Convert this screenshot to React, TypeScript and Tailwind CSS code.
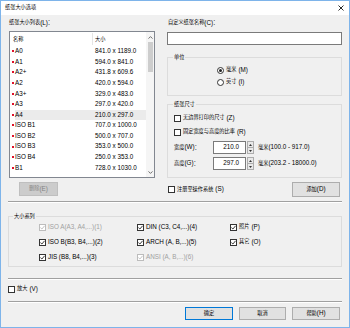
import React from "react";

// CJK runs render a bit smaller than latin in the reference
const CJK = /([\u2E80-\u9FFF\u3000-\u303F\uFF00-\uFFEF]+)/;

function T({ s }: { s: string }) {
  return (
    <>
      {s.split(CJK).map((part, i) =>
        i % 2 === 1 ? (
          <span key={i} className="text-[5.2px]">
            {part}
          </span>
        ) : (
          part
        )
      )}
    </>
  );
}

function Check({ checked, disabled }: { checked?: boolean; disabled?: boolean }) {
  return (
    <span
      className={`flex h-[7px] w-[7px] shrink-0 items-center justify-center border bg-white ${
        disabled ? "border-[#bcbcbc]" : "border-[#333333]"
      }`}
    >
      {checked && (
        <svg width="5" height="5" viewBox="0 0 5 5">
          <path
            d="M0.4 2.6 L1.9 4 L4.6 0.8"
            fill="none"
            stroke={disabled ? "#bcbcbc" : "#222222"}
            strokeWidth="0.9"
          />
        </svg>
      )}
    </span>
  );
}

function Radio({ on }: { on?: boolean }) {
  return (
    <span className="flex h-[7px] w-[7px] shrink-0 items-center justify-center rounded-full border border-[#333333] bg-white">
      {on && <span className="h-[3px] w-[3px] rounded-full bg-[#222222]" />}
    </span>
  );
}

function Btn({
  label,
  primary,
  disabled,
  className = "",
}: {
  label: string;
  primary?: boolean;
  disabled?: boolean;
  className?: string;
}) {
  return (
    <div
      className={`flex items-center justify-center border ${
        disabled
          ? "border-[#bfbfbf] bg-[#cccccc] text-[#838383]"
          : primary
          ? "border-[#0078d7] bg-[#e1e1e1]"
          : "border-[#adadad] bg-[#e1e1e1]"
      } ${className}`}
    >
      <T s={label} />
    </div>
  );
}

function Separator({ className = "" }: { className?: string }) {
  return <div className={`mx-[7px] h-[2px] border-t border-b border-t-[#a0a0a0] border-b-white ${className}`} />;
}

const papers = [
  { name: "A0", size: "841.0 x 1189.0" },
  { name: "A1", size: "594.0 x 841.0" },
  { name: "A2+", size: "431.8 x 609.6" },
  { name: "A2", size: "420.0 x 594.0" },
  { name: "A3+", size: "329.0 x 483.0" },
  { name: "A3", size: "297.0 x 420.0" },
  { name: "A4", size: "210.0 x 297.0" },
  { name: "ISO B1", size: "707.0 x 1000.0" },
  { name: "ISO B2", size: "500.0 x 707.0" },
  { name: "ISO B3", size: "353.0 x 500.0" },
  { name: "ISO B4", size: "250.0 x 353.0" },
  { name: "B1", size: "728.0 x 1030.0" },
];

const series = [
  { label: "ISO A(A3, A4,...)(1)", checked: true, disabled: true },
  { label: "DIN (C3, C4,...)(4)", checked: true },
  { label: "照片(P)", checked: true },
  { label: "ISO B(B3, B4,...)(2)", checked: true },
  { label: "ARCH (A, B,...)(5)", checked: true },
  { label: "其它(O)", checked: true },
  { label: "JIS (B8, B4,...)(3)", checked: true },
  { label: "ANSI (A, B,...)(6)", checked: true, disabled: true },
];

function SizeRow({ label, value, range }: { label: string; value: string; range: string }) {
  return (
    <div className="flex h-[13px] items-center pl-[6px]">
      <div className="w-[39px]">
        <T s={label} />
      </div>
      <div className="flex h-full w-[33px] items-center justify-end border border-[#7a7a7a] bg-white pr-[6px]">
        {value}
      </div>
      <div className="ml-px flex h-full w-[7px] flex-col border border-[#adadad] bg-[#e9e9e9]">
        <div className="flex flex-1 items-center justify-center border-b border-[#adadad]">
          <svg width="3" height="2" viewBox="0 0 3 2">
            <path d="M0 2 L1.5 0 L3 2 Z" fill="#333" />
          </svg>
        </div>
        <div className="flex flex-1 items-center justify-center">
          <svg width="3" height="2" viewBox="0 0 3 2">
            <path d="M0 0 L1.5 2 L3 0 Z" fill="#333" />
          </svg>
        </div>
      </div>
      <div className="ml-[4px]">
        <T s={range} />
      </div>
    </div>
  );
}

export default function App() {
  return (
    <div className="flex h-[328px] w-[350px] flex-col border border-[#7eb4ea] bg-[#f0f0f0] font-['Liberation_Sans','Noto_Sans_CJK_SC',sans-serif] text-[6.3px] leading-none text-black">
      {/* Title bar */}
      <div className="flex h-[14px] items-center justify-between bg-white pl-[4px] pr-[5px]">
        <T s="纸张大小选项" />
        <svg width="6" height="6" viewBox="0 0 6 6">
          <path d="M0.5 0.5 L5.5 5.5 M5.5 0.5 L0.5 5.5" stroke="#111" strokeWidth="0.9" />
        </svg>
      </div>

      {/* Top section */}
      <div className="flex pl-[8px] pt-[3px]">
        {/* Paper list */}
        <div className="flex w-[146px] flex-col">
          <div className="flex h-[10px] items-center">
            <T s="纸张大小列表(L)：" />
          </div>
          <div className="mt-[3px] flex h-[147px] border border-[#828790] bg-white">
            <div className="flex flex-1 flex-col">
              <div className="flex h-[14px] items-center">
                <div className="w-[82px] pl-[3px]">
                  <T s="名称" />
                </div>
                <div className="h-[12px] w-px bg-[#e5e5e5]" />
                <div className="pl-[2px]">
                  <T s="大小" />
                </div>
              </div>
              {papers.map((p) => (
                <div key={p.name} className="flex h-[10.6px] items-center pl-[2px]">
                  <span className="h-[2px] w-[2px] bg-[#e0102a]" />
                  <div
                    className={`ml-px flex h-full flex-1 items-center ${
                      p.name === "A4" ? "bg-[#ebebeb]" : ""
                    }`}
                  >
                    <div className="w-[80px]">{p.name}</div>
                    <div>{p.size}</div>
                  </div>
                </div>
              ))}
            </div>
            {/* Scrollbar */}
            <div className="flex w-[8px] flex-col items-center bg-[#f5f5f5]">
              <div className="flex h-[10px] items-center justify-center">
                <svg width="5" height="3" viewBox="0 0 5 3">
                  <path d="M0.5 2.6 L2.5 0.6 L4.5 2.6" fill="none" stroke="#606060" strokeWidth="0.9" />
                </svg>
              </div>
              <div className="h-[30px] w-[5px] bg-[#cdcdcd]" />
              <div className="flex-1" />
              <div className="flex h-[10px] items-center justify-center">
                <svg width="5" height="3" viewBox="0 0 5 3">
                  <path d="M0.5 0.4 L2.5 2.4 L4.5 0.4" fill="none" stroke="#606060" strokeWidth="0.9" />
                </svg>
              </div>
            </div>
          </div>
          <Btn label="删除(E)" disabled className="ml-[10px] mt-[4px] h-[14px] w-[39px]" />
        </div>

        {/* Right settings */}
        <div className="ml-[12px] flex w-[175px] flex-col">
          <div className="flex h-[10px] items-center pl-px">
            <T s="自定义纸张名称(C)：" />
          </div>
          <div className="mt-[4px] h-[13px] border border-[#7a7a7a] bg-white" />

          <fieldset className="mt-[8px] h-[43px] border border-[#dcdcdc]">
            <legend className="ml-[5px] px-px leading-[8px]">
              <T s="单位" />
            </legend>
            <div className="mt-[4px] flex h-[10px] items-center gap-[2px] pl-[49px]">
              <Radio on />
              <T s="毫米(M)" />
            </div>
            <div className="mt-[2px] flex h-[10px] items-center gap-[2px] pl-[49px]">
              <Radio />
              <T s="英寸(I)" />
            </div>
          </fieldset>

          <fieldset className="mt-[4px] h-[78px] border border-[#dcdcdc]">
            <legend className="ml-[5px] px-px leading-[8px]">
              <T s="纸张尺寸" />
            </legend>
            <div className="mt-[5px] flex h-[10px] items-center gap-[2px] pl-[6px]">
              <Check />
              <T s="无边界打印的尺寸(Z)" />
            </div>
            <div className="mt-[4px] flex h-[10px] items-center gap-[2px] pl-[6px]">
              <Check />
              <T s="固定宽度与高度的比率(R)" />
            </div>
            <div className="mt-[4px]">
              <SizeRow label="宽度(W)：" value="210.0" range="毫米(100.0 - 917.0)" />
            </div>
            <div className="mt-[3px]">
              <SizeRow label="高度(G)：" value="297.0" range="毫米(203.2 - 18000.0)" />
            </div>
          </fieldset>

          <div className="mt-[4px] flex h-[15px] items-center justify-between">
            <div className="flex items-center gap-[2px] pl-px">
              <Check />
              <T s="注册至操作系统(S)" />
            </div>
            <Btn label="添加(D)" className="mr-[2px] h-[15px] w-[48px]" />
          </div>
        </div>
      </div>

      <Separator className="mt-[4px]" />

      {/* Size series */}
      <fieldset className="mx-[7px] mt-[9px] h-[55px] border border-[#dcdcdc]">
        <legend className="ml-[4px] px-px leading-[8px]">
          <T s="大小系列" />
        </legend>
        <div className="mt-[2px] grid grid-cols-[98px_93px_1fr] gap-y-[5px] pl-[30px]">
          {series.map((s) => (
            <div
              key={s.label}
              className={`flex h-[10px] items-center gap-[2px] ${s.disabled ? "text-[#a0a0a0]" : ""}`}
            >
              <Check checked={s.checked} disabled={s.disabled} />
              <T s={s.label} />
            </div>
          ))}
        </div>
      </fieldset>

      <Separator className="mt-[11px]" />

      <div className="mt-[4px] flex h-[10px] items-center gap-[2px] pl-[7px]">
        <Check />
        <T s="放大(V)" />
      </div>

      <Separator className="mt-[7px]" />

      {/* Dialog buttons */}
      <div className="mt-[4px] flex justify-end gap-[6px] pr-[9px]">
        <Btn label="确定" primary className="h-[13px] w-[48px]" />
        <Btn label="取消" className="h-[13px] w-[47px]" />
        <Btn label="帮助(H)" className="h-[13px] w-[48px]" />
      </div>
    </div>
  );
}
